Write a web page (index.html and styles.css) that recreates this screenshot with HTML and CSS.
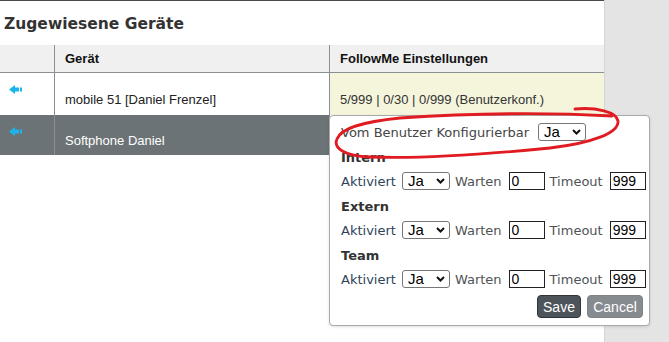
FILE: index.html
```html
<!DOCTYPE html>
<html lang="de">
<head>
	<meta charset="UTF-8">
	<title>Zugewiesene Geräte</title>
	<link rel="stylesheet" href="styles.css">
</head>
<body>

<div class="page">
	<div class="panel">
		<h1 class="title">Zugewiesene Geräte</h1>

		<table class="devices">
			<tr>
				<th class="c-icon">&nbsp;</th>
				<th class="c-name">Gerät</th>
				<th class="c-follow">FollowMe Einstellungen</th>
			</tr>
			<tr class="row-one">
				<td class="c-icon">
					<svg class="arrow" width="14" height="9" viewBox="0 0 14 9"><polygon points="0,4.5 6,0 6,2.5 10,2.5 10,6.5 6,6.5 6,9"/><rect x="11" y="2.5" width="2" height="4"/></svg>
				</td>
				<td>mobile 51 [Daniel Frenzel]</td>
				<td class="follow">5/999 | 0/30 | 0/999 (Benutzerkonf.)</td>
			</tr>
			<tr class="row-two active">
				<td class="c-icon">
					<svg class="arrow" width="14" height="9" viewBox="0 0 14 9"><polygon points="0,4.5 6,0 6,2.5 10,2.5 10,6.5 6,6.5 6,9"/><rect x="11" y="2.5" width="2" height="4"/></svg>
				</td>
				<td>Softphone Daniel</td>
				<td class="under">&nbsp;</td>
			</tr>
		</table>
	</div>

	<div class="side"></div>

	<!-- popup for FollowMe settings -->
	<div class="popover">
		<div class="line">
			<span>Vom Benutzer Konfigurierbar</span>
			<span class="pick"><select class="sel"><option>Ja</option><option>Nein</option></select><svg class="chev" width="9" height="6" viewBox="0 0 9 6"><path d="M1 1 L4.5 4.5 L8 1"/></svg></span>
		</div>

		<div class="section">Intern</div>
		<div class="line">
			<span class="lbl-on">Aktiviert</span>
			<span class="pick"><select class="sel"><option>Ja</option><option>Nein</option></select><svg class="chev" width="9" height="6" viewBox="0 0 9 6"><path d="M1 1 L4.5 4.5 L8 1"/></svg></span>
			<span class="lbl">Warten</span>
			<input class="num" type="text" value="0">
			<span class="lbl">Timeout</span>
			<input class="num" type="text" value="999">
		</div>

		<div class="section">Extern</div>
		<div class="line">
			<span class="lbl-on">Aktiviert</span>
			<span class="pick"><select class="sel"><option>Ja</option><option>Nein</option></select><svg class="chev" width="9" height="6" viewBox="0 0 9 6"><path d="M1 1 L4.5 4.5 L8 1"/></svg></span>
			<span class="lbl">Warten</span>
			<input class="num" type="text" value="0">
			<span class="lbl">Timeout</span>
			<input class="num" type="text" value="999">
		</div>

		<div class="section">Team</div>
		<div class="line">
			<span class="lbl-on">Aktiviert</span>
			<span class="pick"><select class="sel"><option>Ja</option><option>Nein</option></select><svg class="chev" width="9" height="6" viewBox="0 0 9 6"><path d="M1 1 L4.5 4.5 L8 1"/></svg></span>
			<span class="lbl">Warten</span>
			<input class="num" type="text" value="0">
			<span class="lbl">Timeout</span>
			<input class="num" type="text" value="999">
		</div>

		<div class="buttons">
			<button class="btn save">Save</button>
			<button class="btn cancel">Cancel</button>
		</div>
	</div>

	<!-- red marker circle drawn over the screen -->
	<svg class="scribble" width="669" height="342" viewBox="0 0 669 342">
		<path d="M575 109 C596 107, 617 112, 618 121 C619 133, 592 143, 550 148 C490 154, 420 159, 370 157 C344 156, 333 148, 337 139 C341 128, 362 122, 400 118 C460 114, 540 112, 612 116"/>
	</svg>
</div>

</body>
</html>
```

FILE: styles.css
```css
*{
	box-sizing: border-box;
}
body{
	margin: 0;
	font-family: "Liberation Sans", Arial, sans-serif;
	font-size: 13px;
	color: #222;
}
.page{
	position: relative;
	display: flex;
	width: 669px;
	height: 342px;
	overflow: hidden;
}
.panel{
	width: 604px;
	height: 342px;
	background: #fff;
	border-top: 1px solid #4a4a4a;
}
.side{
	flex: 1;
	background: #e4e4e4;
	box-shadow: inset 1px 0 0 #d4d4d4;
}

.title{
	margin: 0;
	height: 44px;
	padding: 13px 0 0 4px;
	font-family: "DejaVu Sans", Verdana, sans-serif;
	font-size: 15.5px;
	line-height: 20px;
	font-weight: bold;
	color: #333;
}

.devices{
	width: 604px;
	table-layout: fixed;
	border-collapse: separate;
	border-spacing: 0;
}
.devices th,
.devices td{
	padding: 0 10px;
	line-height: 15px;
	text-align: left;
}
.devices th{
	height: 28px;
	background: #f0f0f0;
	border-bottom: 1px solid #8a8f93;
	font-weight: bold;
	color: #111;
	vertical-align: middle;
}
.devices td{
	vertical-align: bottom;
	padding-bottom: 8px;
}
.devices th + th,
.devices td + td{
	border-left: 1px solid #8a8f93;
}
.devices .c-icon{
	width: 54px;
	padding-left: 9px;
}
.devices td.c-icon{
	vertical-align: top;
	padding-top: 12px;
	padding-bottom: 0;
}
.devices .c-name,
.devices .c-follow{
	width: 275px;
}
.row-one td{
	height: 42px;
}
.row-two td{
	height: 40px;
	padding-bottom: 7px;
}
.follow{
	background: #f5f5dc;
	color: #333;
}
.active td{
	background: #6c7376;
	color: #fff;
}
.active td.under{
	background: #fff;
}
.arrow{
	display: block;
	fill: #1db4ec;
}

/* popup */
.popover{
	position: absolute;
	left: 329px;
	top: 115px;
	width: 321px;
	height: 211px;
	padding: 7px 6px 7px 11px;
	background: #fff;
	border: 1px solid #a7a9ab;
	border-radius: 4px;
	box-shadow: 0 1px 3px rgba(0,0,0,.12);
	font-family: "DejaVu Sans", Verdana, sans-serif;
	font-size: 13px;
	color: #444;
	z-index: 2;
}
.line{
	display: flex;
	align-items: center;
	height: 18px;
	gap: 5px;
}
.line > span:first-child{
	margin-right: 1px;
}
.popover > .line:first-child{
	gap: 8px;
}
.section{
	margin: 9px 0 6px;
	height: 16px;
	line-height: 16px;
	font-weight: bold;
	color: #333;
}
.lbl-on{
	color: #2e4358;
}
.lbl{
	color: #505355;
}
.pick{
	position: relative;
	display: inline-flex;
}
.sel{
	-webkit-appearance: none;
	appearance: none;
	width: 48px;
	height: 18px;
	padding: 0 0 0 5px;
	border: 1px solid #767676;
	border-radius: 3px;
	background: #fff;
	font-family: "Liberation Sans", Arial, sans-serif;
	font-size: 15px;
	line-height: 16px;
	color: #000;
}
.chev{
	position: absolute;
	right: 5px;
	top: 6px;
	pointer-events: none;
}
.chev path{
	fill: none;
	stroke: #111;
	stroke-width: 2;
}
.num{
	width: 36px;
	height: 18px;
	margin-left: 2px;
	padding: 0 2px;
	border: 1px solid #222;
	border-radius: 0;
	font-family: "Liberation Sans", Arial, sans-serif;
	font-size: 14px;
	color: #000;
}
.buttons{
	display: flex;
	justify-content: flex-end;
	gap: 6px;
	margin-top: 7px;
}
.btn{
	height: 23px;
	padding: 0;
	border-radius: 4px;
	font-family: "Liberation Sans", Arial, sans-serif;
	font-size: 14px;
	color: #fff;
}
.save{
	width: 44px;
	background: #4e555a;
	border: 1px solid #2e3438;
}
.cancel{
	width: 56px;
	background: #868b8f;
	border: 1px solid #7e8387;
}

.scribble{
	position: absolute;
	left: 0;
	top: 0;
	pointer-events: none;
	z-index: 3;
}
.scribble path{
	fill: none;
	stroke: #e11b22;
	stroke-width: 2.8;
	stroke-linecap: round;
}
```
